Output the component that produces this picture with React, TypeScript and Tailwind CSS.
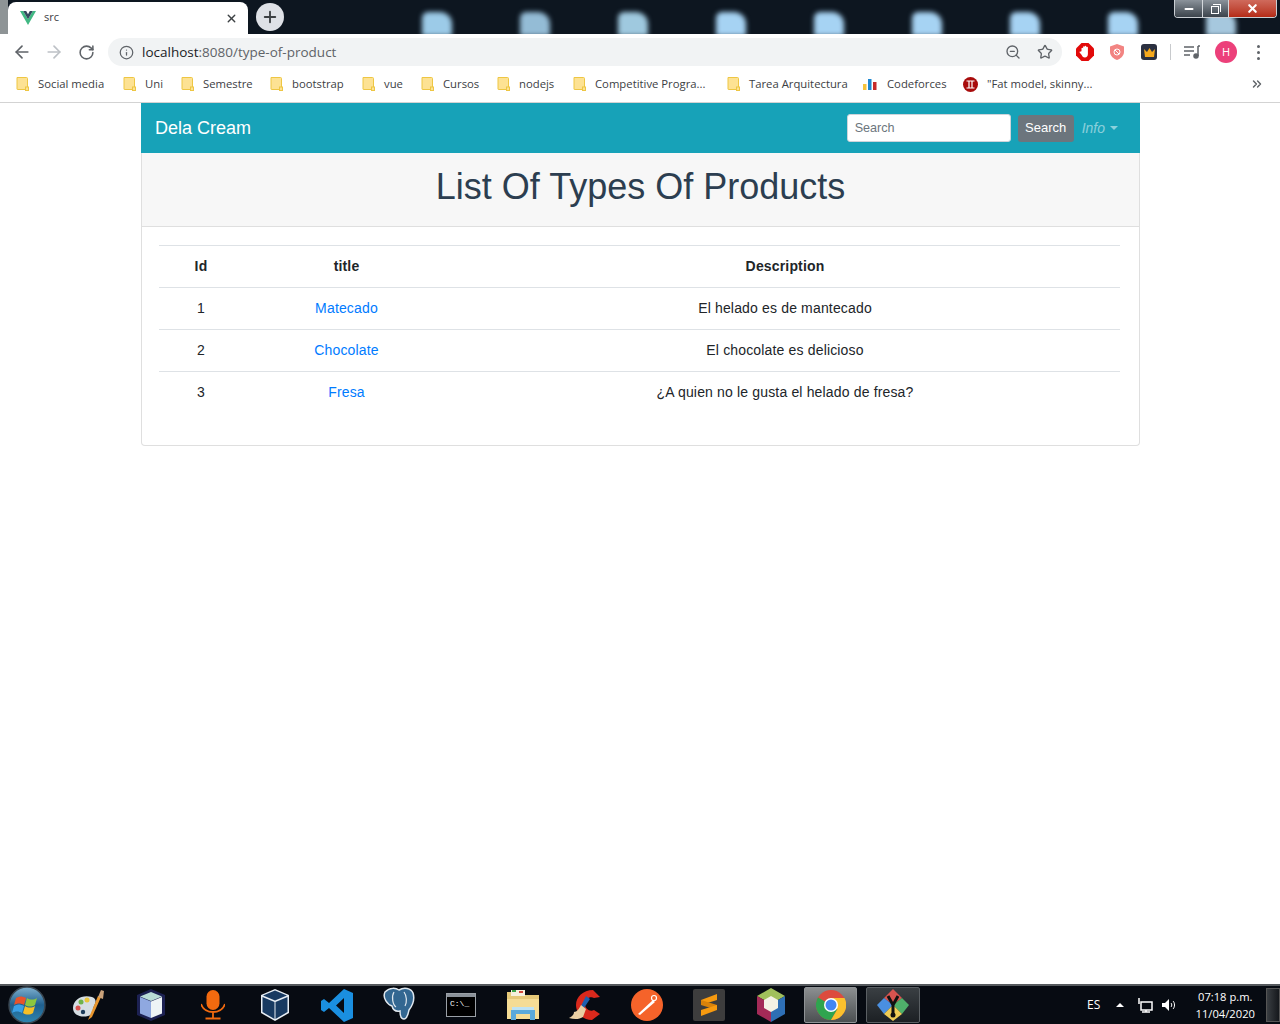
import React from 'react';
import { ArrowLeft, ArrowRight, RotateCw, Info, ZoomOut, Star, X, Plus, ChevronsRight, Minus } from 'lucide-react';

const bookmarks = [
  { label: 'Social media', w: 'w-[107px]', pl: 'pl-[16px]' },
  { label: 'Uni', w: 'w-[58px]', pl: 'pl-0' },
  { label: 'Semestre', w: 'w-[89px]', pl: 'pl-0' },
  { label: 'bootstrap', w: 'w-[92px]', pl: 'pl-0' },
  { label: 'vue', w: 'w-[59px]', pl: 'pl-0' },
  { label: 'Cursos', w: 'w-[76px]', pl: 'pl-0' },
  { label: 'nodejs', w: 'w-[76px]', pl: 'pl-0' },
  { label: 'Competitive Progra...', w: 'w-[154px]', pl: 'pl-0' },
  { label: 'Tarea Arquitectura', w: 'w-[136px]', pl: 'pl-0' },
];

const rows = [
  { id: 1, title: 'Matecado', description: 'El helado es de mantecado' },
  { id: 2, title: 'Chocolate', description: 'El chocolate es delicioso' },
  { id: 3, title: 'Fresa', description: '¿A quien no le gusta el helado de fresa?' },
];

const desktopBlobs = ['bg-[#9ccbe8]', 'bg-[#94bcd6]', 'bg-[#9fc9df]', 'bg-[#a6d3f3]', 'bg-[#a6d3f3]', 'bg-[#a6d3f3]', 'bg-[#a6d3f3]', 'bg-[#a6d3f3]', 'bg-[#a6c8de]'];

const Folder = () => (
  <svg width="13" height="14" viewBox="0 0 13 14" className="shrink-0">
    <path d="M1 .5h9.5a1 1 0 0 1 1 1v11h-10a.5.5 0 0 1-.5-.5z" fill="#fde293" stroke="#eec643" />
    <rect x="9.5" y="10" width="3" height="3.5" fill="#fde293" stroke="#eec643" />
  </svg>
);

const VueLogo = () => (
  <svg width="16" height="14" viewBox="0 0 16 14">
    <path d="M0 0h3.200L8 8.200 12.800 0H16L8 14z" fill="#41b883" />
    <path d="M3.200 0h3L8 3.200 9.800 0h3L8 8.200z" fill="#34495e" />
  </svg>
);

const WindowsOrb = () => (
  <svg width="38" height="38" viewBox="0 0 38 38">
    <defs>
      <linearGradient id="orb" x1="0" y1="0" x2="0" y2="1">
        <stop offset="0" stopColor="#7fb0cf" />
        <stop offset="0.5" stopColor="#1f5f8e" />
        <stop offset="1" stopColor="#2f86b0" />
      </linearGradient>
    </defs>
    <circle cx="19" cy="19" r="18" fill="url(#orb)" stroke="#3a4650" strokeWidth="1.500" />
    <path d="M8 12c3-2 6-2 10 0l-2 7c-3-2-7-2-10 0z" fill="#e8532b" />
    <path d="M19 12c3 2 7 2 10 0l-2 7c-3 2-7 2-10 0z" fill="#8cc63f" />
    <path d="M6 20c3-2 6-2 10 0l-2 7c-3-2-7-2-10 0z" fill="#3aa0e6" />
    <path d="M17 20c3 2 7 2 10 0l-2 7c-3 2-7 2-10 0z" fill="#f6bf26" />
  </svg>
);

const Palette = () => (
  <svg width="36" height="34" viewBox="0 0 36 34">
    <path d="M2 20C2 11 12 6 21 9c5 2 4 6 2 9-2 4 1 8-6 10-7 2-15-1-15-8z" fill="#d5dde2" />
    <circle cx="7" cy="20" r="2.500" fill="#d9534f" />
    <circle cx="10" cy="14" r="2.500" fill="#6fb24a" />
    <circle cx="16" cy="12" r="2.500" fill="#e9c53a" />
    <circle cx="12" cy="24" r="2.200" fill="#1d3c5a" />
    <path d="M17 32 27 8l3 1-9 20z" fill="#e8962e" />
    <path d="M27 9l3-7 3 1-1 8z" fill="#c9a27a" />
  </svg>
);

const Cube = () => (
  <svg width="32" height="34" viewBox="0 0 32 34">
    <path d="M16 1 30 7v20l-14 6-14-6V7z" fill="#1c2152" />
    <path d="M16 4l11 4.500-11 4.500L5 8.500z" fill="#b8dcd6" />
    <path d="M5 9l11 4.500V30L5 25.500z" fill="#8fa8e0" />
    <path d="M27 9l-11 4.500V30l11-4.500z" fill="#eef4f6" />
  </svg>
);

const Mic = () => (
  <svg width="24" height="30" viewBox="0 0 24 30">
    <rect x="5.500" y="0" width="13" height="20" rx="6.500" fill="#f26a0f" />
    <path d="M0 14c2 6 6 8 12 8s10-2 12-8M12 22v6M4.500 28.500h15" stroke="#f26a0f" strokeWidth="1.800" fill="none" />
  </svg>
);

const VBox = () => (
  <svg width="28" height="32" viewBox="0 0 28 32">
    <path d="M14 0 28 6v18l-14 8-14-8V6z" fill="#e8eef4" />
    <path d="M14 1.500 26 6.500 14 11.500 2 6.500z" fill="#183a61" />
    <path d="M1.500 8 13.500 13v17L1.500 23zM26.500 8 14.500 13v17l12-7z" fill="#183a61" />
  </svg>
);

const VSCode = () => (
  <svg width="32" height="33" viewBox="0 0 32 33">
    <path d="M23 0 32 4v25l-9 4-15-14-5 4-3-2v-9l3-2 5 4zM23 9l-8 7.500 8 7.500z" fill="#1a8fe0" fillRule="evenodd" />
  </svg>
);

const Postgres = () => (
  <svg width="34" height="36" viewBox="0 0 34 36">
    <path d="M3 5C8 0 14 1 17 3c5-3 12-2 14 3 2 6-1 13-4 17-1 5-2 9-5 9s-4-4-4-8c-5 1-7-1-8-5C6 18 0 11 3 5z" fill="#336791" stroke="#dfe7ee" strokeWidth="1.500" />
    <path d="M12 5c-3 5-1 13 2 15M22 5c3 4 3 10 1 14" stroke="#dfe7ee" strokeWidth="1.200" fill="none" />
  </svg>
);

const Cmd = () => (
  <div className="w-[30px] h-[24px] border border-[#9aa0a6] bg-black flex flex-col">
    <div className="h-[3px] bg-[#8a9199]" />
    <span className="font-['Liberation_Mono',monospace] text-[8px] leading-[14px] text-white pl-[3px]">C:\_</span>
  </div>
);

const FolderBig = () => (
  <svg width="32" height="32" viewBox="0 0 32 32">
    <path d="M0 3h14l3 3h15v24H0z" fill="#e5c878" />
    <rect x="4" y="1" width="14" height="6" fill="#f6f0dc" />
    <rect x="5" y="1" width="4" height="2" fill="#3ca548" />
    <rect x="12" y="2" width="4" height="2" fill="#d2473a" />
    <path d="M0 10h32v20H0z" fill="#f5dc95" />
    <path d="M4 31V21h24v10h-5v-6H9v6z" fill="#5aa9da" />
    <path d="M5 18h22v3H5z" fill="#bfe3f4" />
  </svg>
);

const CCleaner = () => (
  <svg width="34" height="34" viewBox="0 0 34 34">
    <path d="M32 9 25 2C15 2 8 9 8 17s7 15 16 15l8-6-6-4c-4 2-9-1-9-6 0-5 5-8 9-6z" fill="#d9291c" />
    <path d="M18 8l4 3-6 9-3-2z" fill="#1e5fae" />
    <path d="M13 17l5 4-3 8c-3 2-8 3-14 1 4-2 5-4 5-6 3 0 5-3 7-7z" fill="#e9cfa3" />
  </svg>
);

const Postman = () => (
  <svg width="32" height="32" viewBox="0 0 32 32">
    <circle cx="16" cy="16" r="16" fill="#f5632a" />
    <path d="M7 25 22 11l2 2L9 26z" fill="#fff" />
    <circle cx="23" cy="9" r="2.500" fill="none" stroke="#fff" strokeWidth="1.200" />
  </svg>
);

const Sublime = () => (
  <div className="w-[32px] h-[32px] rounded-[2px] bg-[#3d3d3d] flex items-center justify-center">
    <svg width="18" height="22" viewBox="0 0 18 22">
      <path d="M17 0v6L1 11V6z" fill="#f79a0f" />
      <path d="M1 6l16 5v5L1 11z" fill="#d9820a" />
      <path d="M17 11v5L1 22v-6z" fill="#f79a0f" />
    </svg>
  </div>
);

const NetBeans = () => (
  <svg width="30" height="34" viewBox="0 0 30 34">
    <path d="M15 0 29 8 15 16 1 8z" fill="#a1c05b" />
    <path d="M1 8l14 8v18L1 26z" fill="#a42a57" />
    <path d="M29 8 15 16v18l14-8z" fill="#2e6fb5" />
    <path d="M15 8l7 4v8l-7 4-7-4v-8z" fill="#f4f1e4" />
  </svg>
);

const Chrome = () => (
  <svg width="30" height="30" viewBox="0 0 30 30">
    <circle cx="15" cy="15" r="15" fill="#dd4b3e" />
    <path d="M15 15 2 7.500A15 15 0 0 0 15 30l6.500-11z" fill="#2fa44f" />
    <path d="M15 8h13.500A15 15 0 0 1 15 30l6.500-11z" fill="#fbc02d" />
    <circle cx="15" cy="15" r="7" fill="#fff" />
    <circle cx="15" cy="15" r="5.500" fill="#4285f4" />
  </svg>
);

const GitKraken = () => (
  <svg width="32" height="32" viewBox="0 0 32 32">
    <path d="M16 0 25 9 16 16 7 9z" fill="#d9534f" />
    <path d="M7 9 16 16 7 25 0 16z" fill="#4a8fe0" />
    <path d="M25 9 32 16 25 25 16 16z" fill="#4fb06a" />
    <path d="M7 25 16 16 25 25 16 32z" fill="#f0cc55" />
    <path d="M11 7l5 9 5-9M16 16v9" stroke="#111" strokeWidth="3" fill="none" />
    <circle cx="16" cy="26" r="2.500" fill="#111" />
  </svg>
);

const taskbarIcons = [<Palette />, <Cube />, <Mic />, <VBox />, <VSCode />, <Postgres />, <Cmd />, <FolderBig />, <CCleaner />, <Postman />, <Sublime />, <NetBeans />];

export default function App() {
  return (
    <div className="h-[1024px] w-[1280px] flex flex-col overflow-hidden bg-white font-['Open_Sans',sans-serif]">
      {/* title strip with the blurred desktop behind it */}
      <div className="relative h-[34px] shrink-0 bg-[#0d1620] flex items-end overflow-hidden">
        <div className="w-[8px] h-[34px] bg-[#8e9496]" />
        <div className="w-[240px] h-[32px] bg-white rounded-t-[8px] flex items-center pl-[12px] pr-[10px]">
          <VueLogo />
          <span className="ml-[8px] mb-[2px] text-[11px] text-[#3c4043]">src</span>
          <X size={13} strokeWidth={2.500} className="ml-auto text-[#3c4043]" />
        </div>
        <div className="ml-[8px] mb-[3px] w-[28px] h-[28px] rounded-full bg-[#dee1e6] flex items-center justify-center">
          <Plus size={18} strokeWidth={2.500} className="text-[#3c4043]" />
        </div>
        <div className="ml-[138px] flex gap-[68px] items-end">
          {desktopBlobs.map((c, i) => (
            <div key={i} className={`${c} w-[30px] h-[24px] -mb-[2px] rounded-t-[12px] rounded-tl-[6px] blur-[2.500px]`} />
          ))}
        </div>
        <div className="absolute top-0 right-[3px] w-[103px] h-[18px] flex border border-t-0 border-[#c9ced3] rounded-b-[4px] overflow-hidden">
          <div className="w-[28px] bg-gradient-to-b from-[#8b939b] to-[#3c444c] flex items-center justify-center border-r border-[#d4d8dc]">
            <Minus size={12} strokeWidth={4} className="text-white" />
          </div>
          <div className="w-[26px] bg-gradient-to-b from-[#8b939b] to-[#3c444c] flex items-center justify-center border-r border-[#d4d8dc]">
            <div className="relative w-[8px] h-[8px] border border-white mt-[2px] mr-[2px]">
              <div className="absolute -top-[3px] -right-[3px] w-[8px] h-[8px] border-t border-r border-white" />
            </div>
          </div>
          <div className="flex-1 bg-gradient-to-b from-[#cf6a5c] to-[#b52a14] flex items-center justify-center">
            <X size={13} strokeWidth={4} className="text-white" />
          </div>
        </div>
      </div>

      {/* toolbar */}
      <div className="h-[36px] shrink-0 flex items-center bg-white">
        <div className="w-[108px] shrink-0 flex items-center pl-[12px] gap-[12px] text-[#5f6368]">
          <ArrowLeft size={20} strokeWidth={2} />
          <ArrowRight size={20} strokeWidth={2} className="text-[#bdc1c6]" />
          <RotateCw size={17} strokeWidth={2.200} className="ml-[2px]" />
        </div>
        <div className="w-[954px] h-[28px] rounded-full bg-[#f1f3f4] flex items-center pl-[11px] pr-[9px]">
          <Info size={15} strokeWidth={2} className="text-[#5f6368]" />
          <span className="ml-[8px] text-[13.500px] text-[#5f6368]">
            <span className="text-[#202124]">localhost</span>:8080/type-of-product
          </span>
          <ZoomOut size={16} strokeWidth={2} className="ml-auto text-[#5f6368]" />
          <Star size={16} strokeWidth={2} className="ml-[16px] text-[#5f6368]" />
        </div>
        <div className="flex-1 flex items-center pl-[14px] text-[#5f6368]">
          <svg width="18" height="18" viewBox="0 0 18 18" className="shrink-0">
            <path d="M5.500 0h7L18 5.500v7L12.500 18h-7L0 12.500v-7z" fill="#e20a0a" />
            <path d="M5.500 8V5.500a.8.8 0 0 1 1.600 0V4a.8.8 0 0 1 1.600 0V3.500a.8.8 0 0 1 1.600 0V4.500a.8.8 0 0 1 1.600 0V11c0 2-1.200 3.500-3 3.500-2 0-2.500-1-3.200-2.500L3.600 9.500c-.4-.8.600-1.500 1.200-.8z" fill="#fff" />
          </svg>
          <svg width="16" height="16" viewBox="0 0 16 16" className="ml-[15px] shrink-0">
            <path d="M8 0l7 2.500V8c0 4-4 7-7 8-3-1-7-4-7-8V2.500z" fill="#f28482" />
            <circle cx="8" cy="8" r="3" fill="none" stroke="#fff" strokeWidth="1" />
            <path d="M6 6l4 4" stroke="#fff" strokeWidth="1" />
          </svg>
          <div className="ml-[16px] w-[16px] h-[16px] rounded-[3px] bg-[#2b3040] flex items-center justify-center">
            <svg width="11" height="9" viewBox="0 0 11 9">
              <path d="M0 1l3 3 2.500-4L8 4l3-3-1 8H1z" fill="#f5a81c" />
            </svg>
          </div>
          <div className="ml-[13px] w-px h-[16px] bg-[#c8cacd]" />
          <svg width="16" height="14" viewBox="0 0 16 14" className="ml-[13px] shrink-0" fill="none" stroke="#5f6368" strokeWidth="1.500">
            <path d="M0 2h10M0 6h10M0 10h6M14 1v10" />
            <circle cx="12" cy="11" r="2" fill="#5f6368" />
            <path d="M14 1h2" />
          </svg>
          <div className="ml-[15px] w-[22px] h-[22px] rounded-full bg-[#ec407a] flex items-center justify-center text-[11px] text-white">H</div>
          <div className="ml-[20px] flex flex-col gap-[3px]">
            <span className="w-[3px] h-[3px] rounded-full bg-[#5f6368]" />
            <span className="w-[3px] h-[3px] rounded-full bg-[#5f6368]" />
            <span className="w-[3px] h-[3px] rounded-full bg-[#5f6368]" />
          </div>
        </div>
      </div>

      {/* bookmarks bar */}
      <div className="h-[33px] shrink-0 flex items-center pb-[4px] border-b border-[#d3d3d3] text-[11.300px] text-[#3c4043]">
        {bookmarks.map((b) => (
          <div key={b.label} className={`${b.w} ${b.pl} shrink-0 box-content flex items-center gap-[9px]`}>
            <Folder />
            <span className="whitespace-nowrap">{b.label}</span>
          </div>
        ))}
        <svg width="14" height="13" viewBox="0 0 14 13" className="shrink-0">
          <rect x="0" y="6" width="3.500" height="6" fill="#f5c33b" />
          <rect x="5" y="1" width="3.500" height="11" fill="#1e88d2" />
          <rect x="10" y="4" width="3.500" height="8" fill="#c62a2a" />
        </svg>
        <span className="ml-[10px] w-[76px] whitespace-nowrap">Codeforces</span>
        <svg width="15" height="15" viewBox="0 0 15 15" className="shrink-0">
          <circle cx="7.500" cy="7.500" r="7.500" fill="#a80c0c" />
          <path d="M3.500 4h8M3.500 11h8M6 4v7M9 4v7" stroke="#fff" strokeWidth="1.200" fill="none" />
        </svg>
        <span className="ml-[9px] whitespace-nowrap">"Fat model, skinny...</span>
        <ChevronsRight size={14} strokeWidth={2.500} className="ml-auto mr-[16px] text-[#5f6368]" />
      </div>

      {/* page */}
      <main className="flex-1 pl-[141px] pr-[140px] font-['Liberation_Sans',sans-serif]">
        <nav className="h-[50px] bg-[#17a2b8] flex items-center pl-[14px] pr-[22px]">
          <span className="text-[18px] text-white">Dela Cream</span>
          <input
            placeholder="Search"
            className="ml-auto w-[164px] h-[28px] rounded-[3px] bg-white px-[7px] text-[12.600px] text-[#495057] placeholder:text-[#6c757d] outline-none border border-[#ced4da]"
          />
          <button className="ml-[7px] w-[56px] h-[27px] rounded-[3px] bg-[#6c757d] text-[13px] text-white">Search</button>
          <span className="ml-[8px] flex items-center text-[14px] italic text-white/50">
            Info
            <span className="ml-[5px] border-x-[4.500px] border-x-transparent border-t-[4.500px] border-t-white/50" />
          </span>
        </nav>
        <section className="h-[293px] border border-t-0 border-[#dfdfdf] rounded-b-[4px]">
          <header className="h-[74px] bg-[#f7f7f7] border-b border-[#dfdfdf] flex items-center justify-center pb-[6px]">
            <h1 className="text-[36px] text-[#2c3e50]">List Of Types Of Products</h1>
          </header>
          <div className="px-[17px] pt-[18px]">
            <table className="w-[961px] table-fixed text-[14px] tracking-[0.16px] text-center text-[#212529]">
              <colgroup>
                <col className="w-[84px]" />
                <col className="w-[207px]" />
                <col />
              </colgroup>
              <thead>
                <tr className="h-[42px] border-t border-[#dee2e6]">
                  <th className="font-bold">Id</th>
                  <th className="font-bold">title</th>
                  <th className="font-bold">Description</th>
                </tr>
              </thead>
              <tbody>
                {rows.map((r) => (
                  <tr key={r.id} className="h-[42px] border-t border-[#dee2e6]">
                    <td>{r.id}</td>
                    <td className="text-[#007bff]">{r.title}</td>
                    <td>{r.description}</td>
                  </tr>
                ))}
              </tbody>
            </table>
          </div>
        </section>
      </main>

      {/* windows taskbar */}
      <footer className="h-[40px] shrink-0 bg-[#070b12] border-t-2 border-[#55595d] flex items-center text-white">
        <div className="w-[58px] flex justify-center pr-[4px]">
          <WindowsOrb />
        </div>
        <div className="flex">
          {taskbarIcons.map((icon, i) => (
            <div key={i} className="w-[62px] h-[38px] flex items-center justify-center">{icon}</div>
          ))}
        </div>
        <div className="ml-[2px] w-[53px] h-[36px] rounded-[2px] border border-[#8f9396] bg-gradient-to-b from-[#8c8f91] to-[#4c5052] flex items-center justify-center">
          <Chrome />
        </div>
        <div className="ml-[9px] w-[54px] h-[36px] rounded-[2px] border border-[#5a5f63] bg-gradient-to-b from-[#3a3f43] to-[#1c2024] flex items-center justify-center">
          <GitKraken />
        </div>
        <div className="ml-[167px] flex items-center text-[12px] font-['Open_Sans',sans-serif]">
          <span>ES</span>
          <span className="ml-[16px] border-x-[4px] border-x-transparent border-b-[4px] border-b-white" />
          <svg width="16" height="16" viewBox="0 0 16 16" className="ml-[13px]" fill="none" stroke="#fff" strokeWidth="1.500">
            <rect x="4" y="5" width="11" height="8" />
            <path d="M2 1v6M9 13v2M5 15h8" />
          </svg>
          <svg width="16" height="16" viewBox="0 0 16 16" className="ml-[8px]" fill="#fff">
            <path d="M1 6h3l4-4v12l-4-4H1z" />
            <path d="M10 6c1 1 1 3 0 4M12 4c2 2 2 6 0 8" stroke="#fff" fill="none" />
          </svg>
          <div className="ml-[18px] w-[60px] text-center text-[11.200px] leading-[17px]">
            <div>07:18 p.m.</div>
            <div>11/04/2020</div>
          </div>
        </div>
        <div className="ml-auto w-[14px] h-[34px] border border-[#555] bg-gradient-to-r from-[#3a3e42] to-[#15181c]" />
      </footer>
    </div>
  );
}
